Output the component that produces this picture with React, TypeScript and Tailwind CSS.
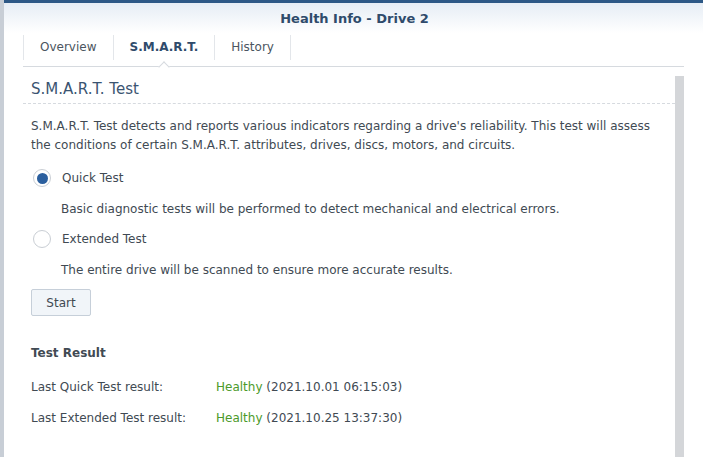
const font = { fontFamily: '"DejaVu Sans", Verdana, sans-serif' };

function Radio({ checked }: { checked?: boolean }) {
  return (
    <span className="flex h-[18px] w-[18px] items-center justify-center rounded-full border border-[#c9ced4] bg-white">
      {checked && <span className="h-[11px] w-[11px] rounded-full bg-[#2b5f9e]" />}
    </span>
  );
}

function Tab({ label, active }: { label: string; active?: boolean }) {
  return (
    <div className="relative flex h-full items-center pb-[6px] pl-[16px] pr-[17px]">
      <span className={active ? 'font-bold text-[#2f4b6b]' : 'text-[#4b5560]'}>{label}</span>
      <span className="absolute bottom-[6px] right-0 top-[2px] w-px bg-[#e3e6ea]" />
      {active && (
        <span className="absolute bottom-[-1px] left-1/2 h-[8px] w-[8px] -translate-x-1/2 translate-y-1/2 rotate-45 border-l border-t border-[#d6dadf] bg-white" />
      )}
    </div>
  );
}

export default function App() {
  return (
    <div className="flex h-[457px] w-[703px] overflow-hidden bg-white text-[12px] text-[#414a53]" style={font}>
      <div className="w-[4px] shrink-0 bg-[#c8ced6]" />
      <div className="flex flex-1 flex-col">
        <div className="h-[3px] bg-[#2d5886]" />
        <div className="flex h-[30px] items-center justify-center bg-gradient-to-b from-[#e6edf5] to-white pl-[2px] pt-[2px] text-[13px] font-bold text-[#2f4b6b]">
          Health Info - Drive 2
        </div>
        <div className="relative ml-[19px] mr-[19px] flex h-[34px] border-b border-[#d6dadf] pl-[1px]">
          <span className="absolute bottom-[6px] left-0 top-[2px] w-px bg-[#e3e6ea]" />
          <Tab label="Overview" />
          <Tab label="S.M.A.R.T." active />
          <Tab label="History" />
        </div>
        <div className="ml-[19px] mr-[19px] mt-[9px] flex flex-1">
          <div className="flex-1">
            <div className="flex h-[28px] items-center border-b border-dashed border-[#d6dadf] pl-[8px] text-[15px] text-[#3a5471]">
              S.M.A.R.T. Test
            </div>
            <div className="pl-[8px] pt-[13px]">
              <p className="pr-[14px] leading-[19px]">
                S.M.A.R.T. Test detects and reports various indicators regarding a drive's reliability. This test will assess the conditions of certain S.M.A.R.T. attributes, drives, discs, motors, and circuits.
              </p>
              <div className="mt-[14px] flex items-center gap-[11px] pl-[2px]">
                <Radio checked />
                <span>Quick Test</span>
              </div>
              <p className="mt-[13px] pl-[30px]">Basic diagnostic tests will be performed to detect mechanical and electrical errors.</p>
              <div className="mt-[12px] flex items-center gap-[11px] pl-[2px]">
                <Radio />
                <span>Extended Test</span>
              </div>
              <p className="mt-[13px] pl-[30px]">The entire drive will be scanned to ensure more accurate results.</p>
              <button className="mt-[10px] h-[27px] w-[60px] rounded-[2px] border border-[#c6cfd9] bg-[#f1f5f9] text-[#414a53]">
                Start
              </button>
              <div className="mt-[28px] font-bold">Test Result</div>
              <div className="mt-[16px] flex">
                <span className="w-[185px]">Last Quick Test result:</span>
                <span>
                  <span className="text-[#4c9a2a]">Healthy</span> (2021.10.01 06:15:03)
                </span>
              </div>
              <div className="mt-[13px] flex">
                <span className="w-[185px]">Last Extended Test result:</span>
                <span>
                  <span className="text-[#4c9a2a]">Healthy</span> (2021.10.25 13:37:30)
                </span>
              </div>
            </div>
          </div>
          <div className="w-[9px] shrink-0 bg-[#d4d6d9]" />
        </div>
      </div>
    </div>
  );
}
